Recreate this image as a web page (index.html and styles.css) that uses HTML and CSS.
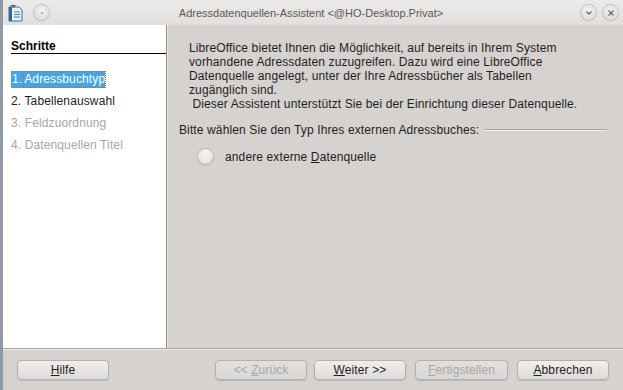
FILE: index.html
```html
<!DOCTYPE html>
<html lang="de">
<head>
    <meta charset="UTF-8">
    <title>Adressdatenquellen-Assistent</title>
    <link rel="stylesheet" href="styles.css">
</head>
<body>
    <div class="window">
        <div class="titlebar">
            <div class="tb-left">
                <svg class="app-icon" width="16" height="18" viewBox="0 0 16 18">
                    <path d="M1 3 L11 3 L14 6 L14 17 L1 17 Z" fill="#eef3f7" stroke="#3e6f96" stroke-width="1"/>
                    <rect x="1" y="3" width="3" height="14" fill="#2f6c9e"/>
                    <path d="M6 8 H12 M6 10.5 H12 M6 13 H12" stroke="#4a7fa8" stroke-width="1.2"/>
                    <path d="M2 1 L8 1 L6 4 Z" fill="#3e6f96"/>
                </svg>
                <span class="tb-btn"><span class="dot"></span></span>
            </div>
            <div class="tb-title">Adressdatenquellen-Assistent &lt;@HO-Desktop.Privat&gt;</div>
            <div class="tb-right">
                <span class="tb-btn">
                    <svg width="8" height="8" viewBox="0 0 8 8"><path d="M1.5 2.5 L4 5 L6.5 2.5" fill="none" stroke="#6a6866" stroke-width="1.3"/></svg>
                </span>
                <span class="tb-btn">
                    <svg width="8" height="8" viewBox="0 0 8 8"><path d="M1.5 1.5 L6.5 6.5 M6.5 1.5 L1.5 6.5" fill="none" stroke="#6a6866" stroke-width="1.3"/></svg>
                </span>
            </div>
        </div>

        <div class="main">
            <div class="steps">
                <div class="steps-head">Schritte</div>
                <ul class="step-list">
                    <li class="active"><span class="sel">1.<span class="focus">Adressbuchtyp</span></span></li>
                    <li>2. Tabellenauswahl</li>
                    <li class="disabled">3. Feldzuordnung</li>
                    <li class="disabled">4. Datenquellen Titel</li>
                </ul>
            </div>
            <div class="page">
                <p class="intro">LibreOffice bietet Ihnen die Möglichkeit, auf bereits in Ihrem System<br>vorhandene Adressdaten zuzugreifen. Dazu wird eine LibreOffice<br>Datenquelle angelegt, unter der Ihre Adressbücher als Tabellen<br>zugänglich sind.<br>&nbsp;Dieser Assistent unterstützt Sie bei der Einrichtung dieser Datenquelle.</p>
                <div class="group-label">
                    <span>Bitte wählen Sie den Typ Ihres externen Adressbuches:</span>
                    <span class="rule"></span>
                </div>
                <label class="radio-row">
                    <span class="radio"></span>
                    <span>andere externe <u>D</u>atenquelle</span>
                </label>
            </div>
        </div>

        <div class="buttons">
            <button class="btn"><u>H</u>ilfe</button>
            <div class="spacer"></div>
            <button class="btn disabled">&lt;&lt; <u>Z</u>urück</button>
            <button class="btn"><u>W</u>eiter &gt;&gt;</button>
            <button class="btn disabled wide"><u>F</u>ertigstellen</button>
            <button class="btn"><u>A</u>bbrechen</button>
        </div>
    </div>
</body>
</html>
```

FILE: styles.css
```css
body {
    margin: 0;
    font-family: "Liberation Sans", Arial, sans-serif;
    font-size: 12px;
    letter-spacing: 0.12px;
    color: #1e1e1e;
    background: #d6d2d0;
}
.window {
    width: 620px;
    height: 390px;
    border-left: 3px solid #8f9aa5;
    display: flex;
    flex-direction: column;
    background: #d6d2d0;
}
.titlebar {
    height: 25px;
    flex-shrink: 0;
    display: flex;
    align-items: center;
    background: linear-gradient(#ecebea, #e1dfdd);
}
.tb-left {
    display: flex;
    align-items: center;
    gap: 10px;
    padding-left: 5px;
}
.app-icon {
    display: block;
}
.tb-btn {
    width: 15px;
    height: 15px;
    border-radius: 50%;
    background: radial-gradient(circle at 50% 35%, #f4f3f2, #d8d6d4);
    box-shadow: 0 0 0 1px #c4c1be, 0 1px 1px rgba(0, 0, 0, 0.15);
    display: flex;
    align-items: center;
    justify-content: center;
}
.dot {
    width: 2px;
    height: 2px;
    border-radius: 50%;
    background: #9b9896;
}
.tb-title {
    flex: 1;
    text-align: center;
    font-size: 11px;
    letter-spacing: 0;
    color: #5a5856;
    padding-right: 8px;
}
.tb-right {
    display: flex;
    gap: 7px;
    padding-right: 5px;
}
.main {
    flex: 1;
    display: flex;
    border-bottom: 1px solid #a9a6a3;
}
.steps {
    width: 164px;
    background: #ffffff;
    border-right: 1px solid #8e8b88;
    padding: 15px 0 0 8px;
    box-sizing: border-box;
}
.steps-head {
    font-weight: bold;
    letter-spacing: 0;
    color: #000;
    border-bottom: 1px solid #000;
    line-height: 12px;
    padding-bottom: 1px;
}
.step-list {
    list-style: none;
    margin: 17px 0 0;
    padding: 0;
}
.step-list li {
    height: 22px;
    line-height: 17px;
    color: #1e1e1e;
    white-space: nowrap;
}
.step-list li.active .sel {
    background: #43a6e4;
    color: #fff;
    display: inline-block;
    padding: 0 0 0 1px;
}
.focus {
    display: inline-block;
    line-height: 15px;
    outline: 1px dotted #d0682a;
    margin-left: 2px;
}
.step-list li.disabled {
    color: #aaa6a3;
}
.page {
    flex: 1;
    border-left: 1px solid #eceae8;
    padding: 16px 16px 0 11px;
}
.intro {
    margin: 0 0 12px 10px;
    line-height: 14px;
    white-space: nowrap;
}
.group-label {
    display: flex;
    align-items: center;
    gap: 5px;
}
.rule {
    flex: 1;
    height: 0;
    border-top: 1px solid #a6a3a0;
    border-bottom: 1px solid #f2f1f0;
}
.radio-row {
    display: flex;
    align-items: center;
    gap: 12px;
    margin: 12px 0 0 19px;
}
.radio {
    width: 15px;
    height: 15px;
    border-radius: 50%;
    background: radial-gradient(circle at 50% 35%, #f7f6f5, #dedcda);
    box-shadow: 0 0 0 1px #bcb9b6, 0 1px 2px rgba(0, 0, 0, 0.2);
}
.buttons {
    height: 40px;
    flex-shrink: 0;
    display: flex;
    align-items: center;
    padding: 0 14px 0 14px;
    gap: 7px;
    border-top: 1px solid #eeecea;
}
.spacer {
    flex: 1;
}
.btn {
    width: 92px;
    height: 20px;
    font-family: inherit;
    font-size: 12px;
    letter-spacing: 0.12px;
    color: #1e1e1e;
    border: 1px solid #b3b0ad;
    border-radius: 4px;
    background: linear-gradient(#f0efee, #dddbd9);
    box-shadow: 0 1px 1px rgba(0, 0, 0, 0.12);
    padding: 0;
    margin-top: -1px;
}
.btn.wide {
    width: 93px;
    margin-left: 2px;
    margin-right: 2px;
}
.btn.disabled {
    color: #aaa6a3;
    background: linear-gradient(#e3e1df, #d9d7d5);
}
```
